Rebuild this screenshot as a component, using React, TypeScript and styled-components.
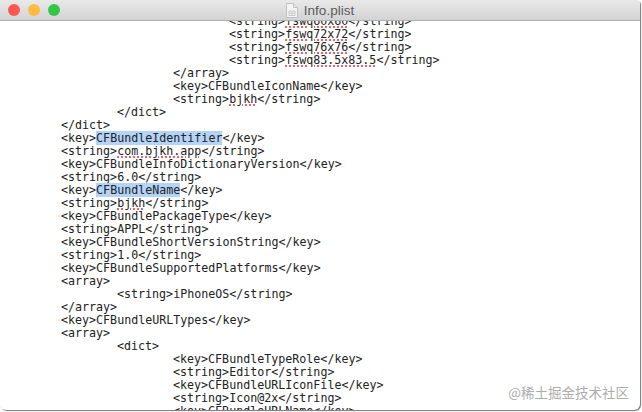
import React from 'react';
import styled, { createGlobalStyle } from 'styled-components';

const GlobalStyle = createGlobalStyle`
	html,
	body {
		margin: 0;
		padding: 0;
		background: #fff;
	}
`;

const Page = styled.div`
	width: 642px;
	height: 412px;
	padding: 0 2px 2px 0;
	box-sizing: border-box;
	background: #fff;
`;

const Window = styled.div`
	position: relative;
	height: 100%;
	display: flex;
	flex-direction: column;
	overflow: hidden;
	background: #fff;
	border-radius: 0 4px 6px 6px;
	box-shadow: 1px 1px 1px #77777a;
`;

const TitleBar = styled.div`
	flex: none;
	position: relative;
	z-index: 1;
	height: 20px;
	display: flex;
	align-items: center;
	justify-content: center;
	gap: 6px;
	background: linear-gradient(#e9e9e9, #d3d3d3);
	border-bottom: 1px solid #b0b0b0;
`;

const Lights = styled.div`
	position: absolute;
	left: 8px;
	top: 4px;
	display: flex;
	gap: 8px;
`;

const Light = styled.span<{ $color: string }>`
	width: 12px;
	height: 12px;
	border-radius: 50%;
	background: ${(p) => p.$color};
`;

const TitleText = styled.span`
	font-family: 'Liberation Sans', Arial, sans-serif;
	font-size: 13.5px;
	color: #5c5c5c;
`;

const Editor = styled.div`
	flex: 1;
	overflow: hidden;
	margin-top: -6px;
	padding-left: 61px;
`;

const Line = styled.div<{ $level: number }>`
	height: 13px;
	line-height: 13px;
	padding-left: ${(p) => p.$level * 56}px;
	font-family: 'DejaVu Sans Mono', monospace;
	font-size: 11.67px;
	color: #222;
	white-space: pre;
`;

const Selected = styled.span`
	background: #b3d3f8;
`;

const Misspelled = styled.span`
	text-decoration: underline dotted #e8656a;
	text-decoration-thickness: 2px;
	text-underline-offset: 1px;
`;

const Watermark = styled.div`
	position: absolute;
	right: 11px;
	bottom: 10px;
	font-family: 'Noto Sans CJK SC', sans-serif;
	font-size: 13.5px;
	line-height: 16px;
	color: #adadad;
`;

const DocIcon = () => (
	<svg width="12" height="15" viewBox="0 0 12 15">
		<path d="M.5.5h7l4 4v10H.5z" fill="#f4f4f4" stroke="#c2c2c2" />
		<path d="M7.5.5v4h4" fill="#e4e4e4" stroke="#c2c2c2" />
		<path d="M3 8h6v4.500H3zM3 10.200h6M6 8v4.500" fill="none" stroke="#c8c8c8" />
	</svg>
);

type PlistLine = {
	level: number;
	body: React.ReactNode;
};

const plistString = (value: React.ReactNode): React.ReactNode => (
	<>
		{'<string>'}
		{value}
		{'</string>'}
	</>
);

const lines: PlistLine[] = [
	{ level: 3, body: plistString(<Misspelled>fswq60x60</Misspelled>) },
	{ level: 3, body: plistString(<Misspelled>fswq72x72</Misspelled>) },
	{ level: 3, body: plistString(<Misspelled>fswq76x76</Misspelled>) },
	{ level: 3, body: plistString(<Misspelled>fswq83.5x83.5</Misspelled>) },
	{ level: 2, body: '</array>' },
	{ level: 2, body: '<key>CFBundleIconName</key>' },
	{ level: 2, body: plistString(<Misspelled>bjkh</Misspelled>) },
	{ level: 1, body: '</dict>' },
	{ level: 0, body: '</dict>' },
	{ level: 0, body: <>{'<key>'}<Selected>CFBundleIdentifier</Selected>{'</key>'}</> },
	{ level: 0, body: plistString(<Misspelled>com.bjkh.app</Misspelled>) },
	{ level: 0, body: '<key>CFBundleInfoDictionaryVersion</key>' },
	{ level: 0, body: plistString('6.0') },
	{ level: 0, body: <>{'<key>'}<Selected>CFBundleName</Selected>{'</key>'}</> },
	{ level: 0, body: plistString(<Misspelled>bjkh</Misspelled>) },
	{ level: 0, body: '<key>CFBundlePackageType</key>' },
	{ level: 0, body: plistString('APPL') },
	{ level: 0, body: '<key>CFBundleShortVersionString</key>' },
	{ level: 0, body: plistString('1.0') },
	{ level: 0, body: '<key>CFBundleSupportedPlatforms</key>' },
	{ level: 0, body: '<array>' },
	{ level: 1, body: plistString('iPhoneOS') },
	{ level: 0, body: '</array>' },
	{ level: 0, body: '<key>CFBundleURLTypes</key>' },
	{ level: 0, body: '<array>' },
	{ level: 1, body: '<dict>' },
	{ level: 2, body: '<key>CFBundleTypeRole</key>' },
	{ level: 2, body: plistString('Editor') },
	{ level: 2, body: '<key>CFBundleURLIconFile</key>' },
	{ level: 2, body: plistString('Icon@2x') },
	{ level: 2, body: '<key>CFBundleURLName</key>' },
];

const App = (): JSX.Element => {
	return (
		<Page>
			<GlobalStyle />
			<Window>
				<TitleBar>
					<Lights>
						<Light $color="#fc5753" />
						<Light $color="#fdbc40" />
						<Light $color="#33c748" />
					</Lights>
					<DocIcon />
					<TitleText>Info.plist</TitleText>
				</TitleBar>
				<Editor>
					{lines.map((line, i) => (
						<Line key={i} $level={line.level}>
							{line.body}
						</Line>
					))}
				</Editor>
				<Watermark>@稀土掘金技术社区</Watermark>
			</Window>
		</Page>
	);
};

export default App;
